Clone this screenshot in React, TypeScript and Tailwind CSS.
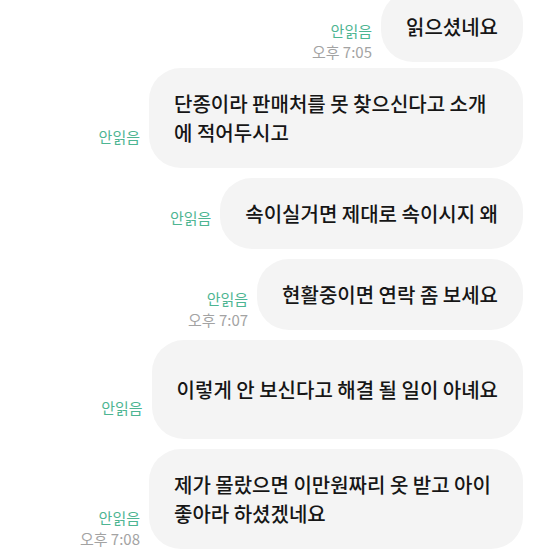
const messages = [
  { text: "읽으셨네요", time: "오후 7:05", tall: false },
  { text: "단종이라 판매처를 못 찾으신다고 소개에 적어두시고", time: "", tall: false },
  { text: "속이실거면 제대로 속이시지 왜", time: "", tall: false },
  { text: "현활중이면 연락 좀 보세요", time: "오후 7:07", tall: false },
  { text: "이렇게 안 보신다고 해결 될 일이 아녜요", time: "", tall: true },
  { text: "제가 몰랐으면 이만원짜리 옷 받고 아이 좋아라 하셨겠네요", time: "오후 7:08", tall: false },
];

export default function App() {
  return (
    <div
      className="w-[554px] h-[554px] overflow-hidden bg-white"
      style={{ fontFamily: '"Noto Sans CJK KR", "Noto Sans", sans-serif' }}
    >
      <div className="flex flex-col gap-[10px] pr-[31px] mt-[-9px]">
        {messages.map((m, i) => (
          <div key={i} className={`flex justify-end items-end gap-[9px] ${i === 0 ? "mb-[-4px]" : ""}`}>
            {/* read status + time */}
            <div className="flex flex-col items-end text-[15px] leading-[21px] whitespace-nowrap">
              <span className="text-[#4db592]">안읽음</span>
              <span className={m.time ? "text-[#a3a3a3]" : "invisible"}>{m.time || "오후 7:00"}</span>
            </div>
            <div
              className={`bg-[#f4f4f4] rounded-[32px] px-[25px] max-w-[374px] text-[20px] leading-[29px] font-medium text-[#161616] ${
                m.tall ? "py-[35px]" : "py-[21px]"
              }`}
            >
              {m.text}
            </div>
          </div>
        ))}
      </div>
    </div>
  );
}
